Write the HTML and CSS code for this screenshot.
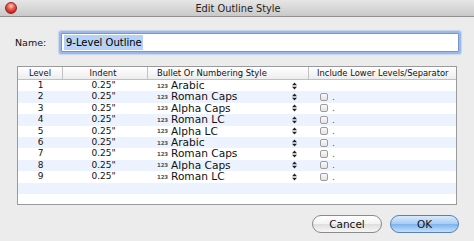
FILE: index.html
```html
<!DOCTYPE html>
<html>
<head>
<meta charset="utf-8">
<link rel="stylesheet" href="styles.css">
</head>
<body>
<div class="window">
  <div class="titlebar">
    <span class="close"></span>
    <span class="title">Edit Outline Style</span>
  </div>
  <div class="content">
    <div class="name-row">
      <label class="name-label">Name:</label>
      <div class="field"><span class="sel">9-Level Outline</span></div>
    </div>
    <div class="table">
      <div class="row head">
        <div class="c c1">Level</div>
        <div class="c c2">Indent</div>
        <div class="c c3 left">Bullet Or Numbering Style</div>
        <div class="c c4 left">Include Lower Levels/Separator</div>
      </div>
      <div class="row"><div class="c c1">1</div><div class="c c2">0.25"</div><div class="c c3 style"><span class="num">123</span><span class="sname">Arabic</span><svg class="step" width="5" height="8" viewBox="0 0 5 8"><path d="M0 3.2 L2.5 0.5 L5 3.2Z M0 4.8 L2.5 7.5 L5 4.8Z" fill="#222"/></svg></div><div class="c c4"></div></div>
      <div class="row alt"><div class="c c1">2</div><div class="c c2">0.25"</div><div class="c c3 style"><span class="num">123</span><span class="sname">Roman Caps</span><svg class="step" width="5" height="8" viewBox="0 0 5 8"><path d="M0 3.2 L2.5 0.5 L5 3.2Z M0 4.8 L2.5 7.5 L5 4.8Z" fill="#222"/></svg></div><div class="c c4 inc"><span class="cb"></span><span class="dot">.</span></div></div>
      <div class="row"><div class="c c1">3</div><div class="c c2">0.25"</div><div class="c c3 style"><span class="num">123</span><span class="sname">Alpha Caps</span><svg class="step" width="5" height="8" viewBox="0 0 5 8"><path d="M0 3.2 L2.5 0.5 L5 3.2Z M0 4.8 L2.5 7.5 L5 4.8Z" fill="#222"/></svg></div><div class="c c4 inc"><span class="cb"></span><span class="dot">.</span></div></div>
      <div class="row alt"><div class="c c1">4</div><div class="c c2">0.25"</div><div class="c c3 style"><span class="num">123</span><span class="sname">Roman LC</span><svg class="step" width="5" height="8" viewBox="0 0 5 8"><path d="M0 3.2 L2.5 0.5 L5 3.2Z M0 4.8 L2.5 7.5 L5 4.8Z" fill="#222"/></svg></div><div class="c c4 inc"><span class="cb"></span><span class="dot">.</span></div></div>
      <div class="row"><div class="c c1">5</div><div class="c c2">0.25"</div><div class="c c3 style"><span class="num">123</span><span class="sname">Alpha LC</span><svg class="step" width="5" height="8" viewBox="0 0 5 8"><path d="M0 3.2 L2.5 0.5 L5 3.2Z M0 4.8 L2.5 7.5 L5 4.8Z" fill="#222"/></svg></div><div class="c c4 inc"><span class="cb"></span><span class="dot">.</span></div></div>
      <div class="row alt"><div class="c c1">6</div><div class="c c2">0.25"</div><div class="c c3 style"><span class="num">123</span><span class="sname">Arabic</span><svg class="step" width="5" height="8" viewBox="0 0 5 8"><path d="M0 3.2 L2.5 0.5 L5 3.2Z M0 4.8 L2.5 7.5 L5 4.8Z" fill="#222"/></svg></div><div class="c c4 inc"><span class="cb"></span><span class="dot">.</span></div></div>
      <div class="row"><div class="c c1">7</div><div class="c c2">0.25"</div><div class="c c3 style"><span class="num">123</span><span class="sname">Roman Caps</span><svg class="step" width="5" height="8" viewBox="0 0 5 8"><path d="M0 3.2 L2.5 0.5 L5 3.2Z M0 4.8 L2.5 7.5 L5 4.8Z" fill="#222"/></svg></div><div class="c c4 inc"><span class="cb"></span><span class="dot">.</span></div></div>
      <div class="row alt"><div class="c c1">8</div><div class="c c2">0.25"</div><div class="c c3 style"><span class="num">123</span><span class="sname">Alpha Caps</span><svg class="step" width="5" height="8" viewBox="0 0 5 8"><path d="M0 3.2 L2.5 0.5 L5 3.2Z M0 4.8 L2.5 7.5 L5 4.8Z" fill="#222"/></svg></div><div class="c c4 inc"><span class="cb"></span><span class="dot">.</span></div></div>
      <div class="row"><div class="c c1">9</div><div class="c c2">0.25"</div><div class="c c3 style"><span class="num">123</span><span class="sname">Roman LC</span><svg class="step" width="5" height="8" viewBox="0 0 5 8"><path d="M0 3.2 L2.5 0.5 L5 3.2Z M0 4.8 L2.5 7.5 L5 4.8Z" fill="#222"/></svg></div><div class="c c4 inc"><span class="cb"></span><span class="dot">.</span></div></div>
      <div class="row alt empty"></div>
      <div class="row empty"></div>
    </div>
    <div class="buttons">
      <button class="btn cancel">Cancel</button>
      <button class="btn ok">OK</button>
    </div>
  </div>
</div>
</body>
</html>
```

FILE: styles.css
```css
* { box-sizing: border-box; }
html, body { margin: 0; padding: 0; }
body {
  width: 474px;
  height: 241px;
  overflow: hidden;
  background: #ececec;
  font-family: "DejaVu Sans", "Liberation Sans", sans-serif;
  color: #111;
}
.window { width: 474px; height: 241px; display: flex; flex-direction: column; }
.titlebar {
  position: relative;
  height: 17px;
  background: linear-gradient(#e6e6e6, #c9c9c9);
  border-bottom: 1px solid #8e8e8e;
  display: flex;
  align-items: center;
  justify-content: center;
}
.close {
  position: absolute;
  left: 5px;
  top: 2px;
  width: 12px;
  height: 12px;
  border-radius: 50%;
  background: radial-gradient(circle at 50% 30%, #ffd0c8 0%, #f0655a 35%, #c8231b 75%, #9a1a12 100%);
  border: 1px solid #8a2a22;
}
.title { font-size: 9.8px; color: #222; padding-left: 2px; }
.content { display: flex; flex-direction: column; }
.name-row {
  display: flex;
  align-items: center;
  margin-top: 15px;
  height: 21px;
  padding-left: 15px;
}
.name-label { font-size: 9.5px; width: 46px; color: #111; }
.field {
  width: 398px;
  height: 19px;
  background: #fff;
  border: 1px solid #7a96c8;
  box-shadow: 0 0 0 2px #9bb8e8, 0 0 1px 3px #c6d6f0;
  border-radius: 1px;
  display: flex;
  align-items: center;
  padding-left: 2px;
}
.sel { background: #b6d2f6; font-size: 10px; padding: 1px 1px 1px 2px; color: #000; line-height: 13px; }
.table {
  margin: 13px 0 0 17px;
  width: 440px;
  height: 139px;
  border: 1px solid #9a9a9a;
  background: #fff;
  overflow: hidden;
}
.row {
  display: grid;
  grid-template-columns: 45px 85px 161px 147px;
  height: 11.4px;
  align-items: center;
  font-size: 9px;
  line-height: 11.4px;
}
.row.alt { background: #edf3fe; }
.row.head {
  height: 13px;
  background: linear-gradient(#ffffff, #ededed);
  border-bottom: 1px solid #c0c0c0;
  font-size: 8.4px;
}
.head .c { border-right: 1px solid #c2c2c2; height: 12px; line-height: 12px; }
.head .c4 { border-right: none; }
.c { text-align: center; white-space: nowrap; }
.c.left { text-align: left; padding-left: 9px; }
.head .c4.left { padding-left: 8px; }
.c2 { padding-right: 4px; }
.style { display: flex; align-items: center; text-align: left; padding-left: 9px; height: 11.4px; }
.num { font-size: 5.5px; font-weight: bold; color: #555; width: 14px; letter-spacing: -0.2px; line-height: 8px; }
.sname { font-size: 10.6px; width: 121px; line-height: 11.4px; height: 11.4px; }
.step { flex: none; }
.inc { display: flex; align-items: center; padding-left: 11px; gap: 4px; }
.cb {
  width: 8px; height: 8px;
  border: 1px solid #9c9c9c;
  border-radius: 2px;
  background: linear-gradient(#fafafa, #e2e2e2);
}
.dot { font-size: 9px; color: #555; line-height: 8px; }
.buttons {
  display: flex;
  justify-content: flex-end;
  gap: 8px;
  margin-top: 10px;
  padding-right: 15px;
}
.btn {
  height: 18px;
  width: 70px;
  border-radius: 9px;
  font-family: "DejaVu Sans", "Liberation Sans", sans-serif;
  font-size: 10.5px;
  color: #111;
  padding: 0;
}
.cancel {
  border: 1px solid #8a8a8a;
  background: linear-gradient(#ffffff 0%, #f2f2f2 50%, #dedede 51%, #f6f6f6 100%);
}
.ok {
  width: 69px;
  border: 1px solid #5b7fb8;
  background: linear-gradient(#d9ebfd 0%, #a6cbf3 50%, #7fb2ec 51%, #c3e1fb 100%);
}
```
